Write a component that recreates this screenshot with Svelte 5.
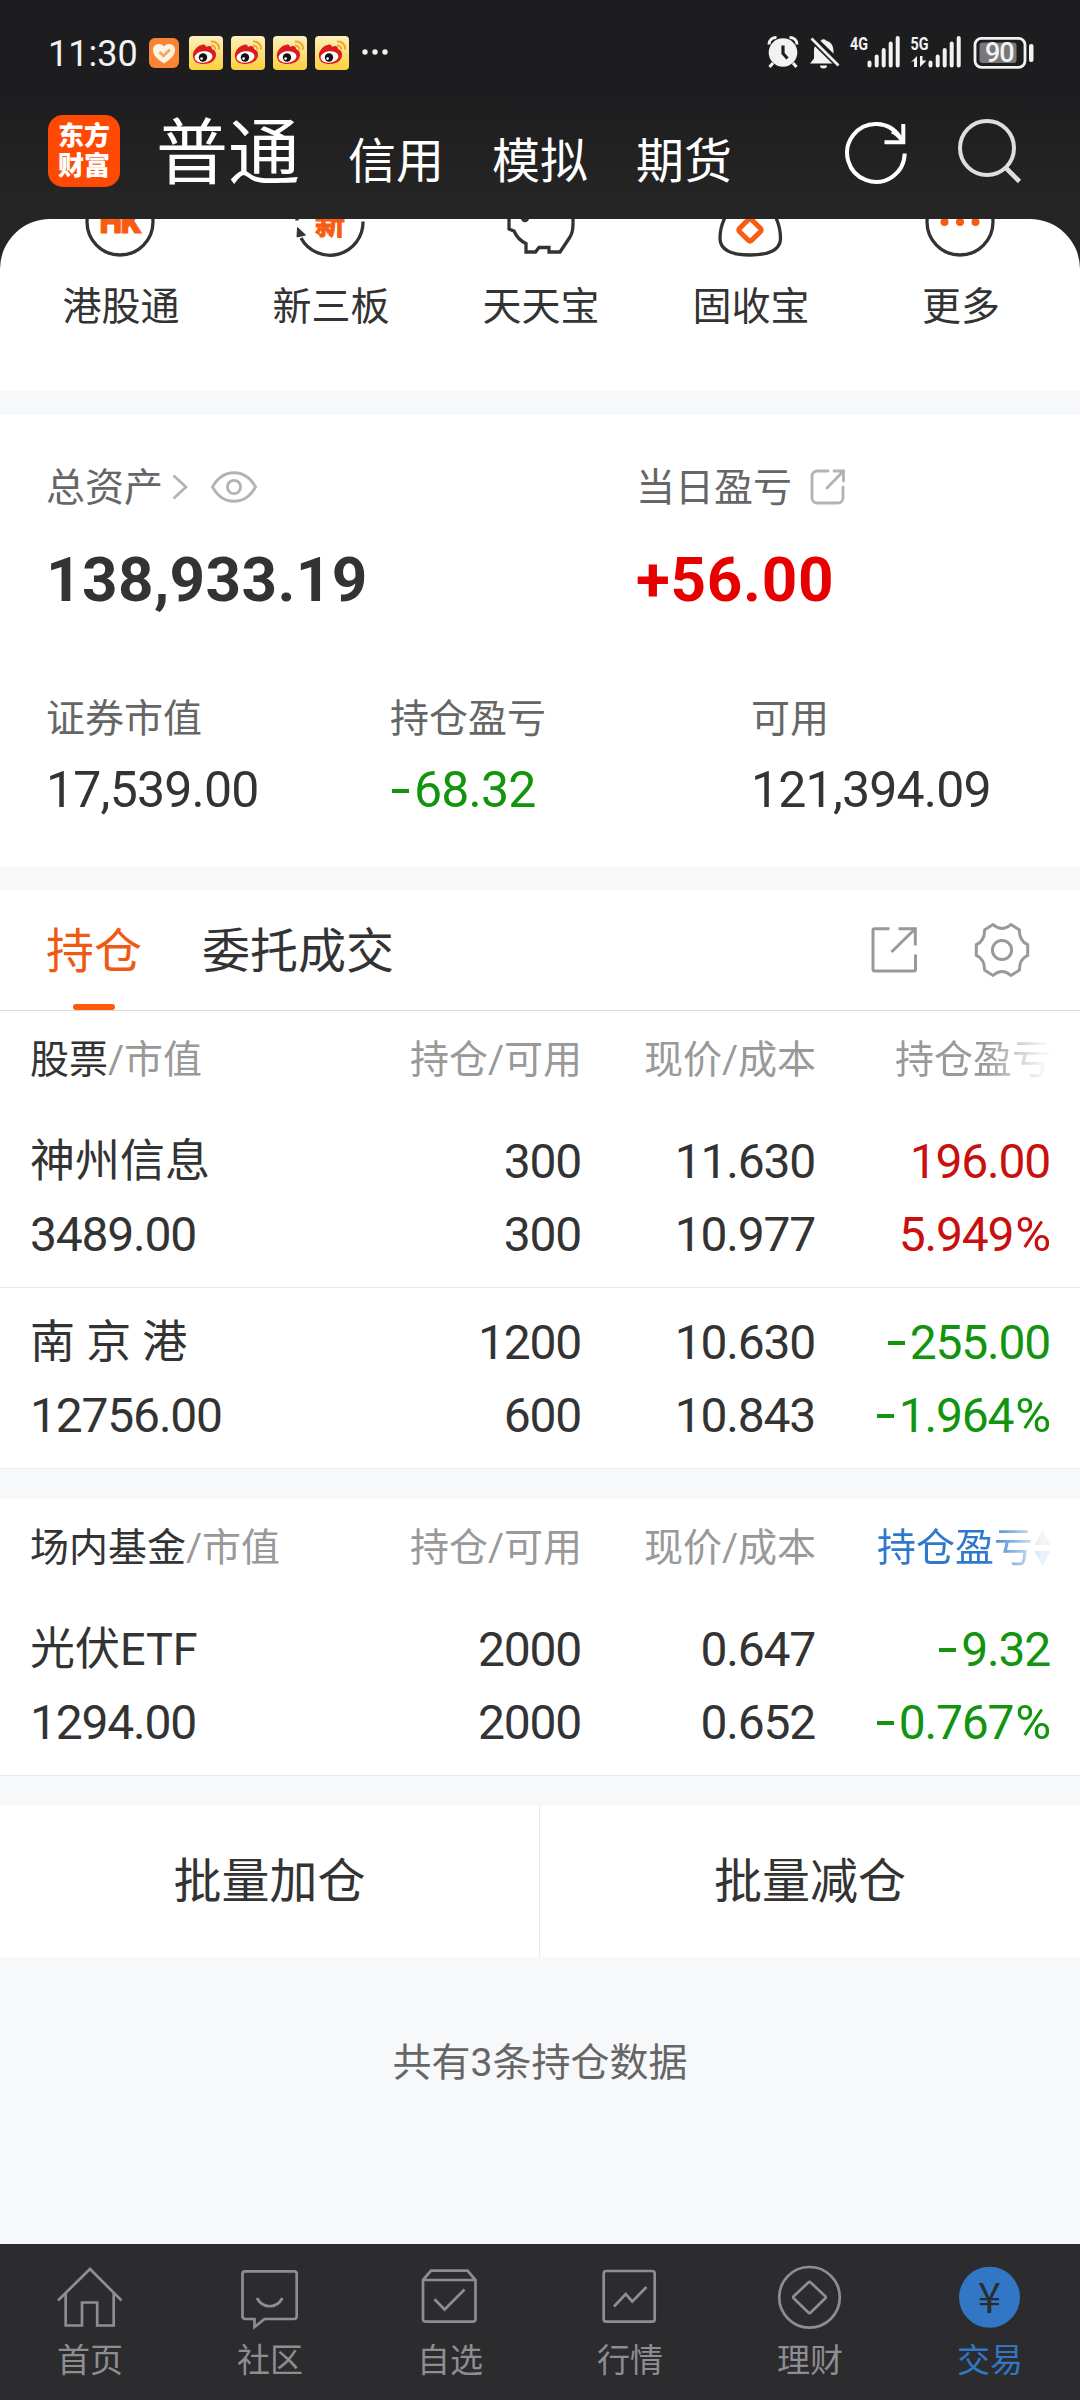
<script lang="ts">
	interface Holding {
		name: string;
		value: string;
		amount: string;
		available: string;
		price: string;
		cost: string;
		profit: string;
		rate: string;
	}

	interface Group {
		title: string;
		sorted: boolean;
		rows: Holding[];
	}

	const accounts = ['信用', '模拟', '期货'];

	const shortcuts = [
		{ id: 'hk', label: '港股通' },
		{ id: 'neeq', label: '新三板' },
		{ id: 'piggy', label: '天天宝' },
		{ id: 'bag', label: '固收宝' },
		{ id: 'more', label: '更多' }
	];

	const groups: Group[] = [
		{
			title: '股票',
			sorted: false,
			rows: [
				{
					name: '神州信息',
					value: '3489.00',
					amount: '300',
					available: '300',
					price: '11.630',
					cost: '10.977',
					profit: '196.00',
					rate: '5.949%'
				},
				{
					name: '南 京 港',
					value: '12756.00',
					amount: '1200',
					available: '600',
					price: '10.630',
					cost: '10.843',
					profit: '-255.00',
					rate: '-1.964%'
				}
			]
		},
		{
			title: '场内基金',
			sorted: true,
			rows: [
				{
					name: '光伏ETF',
					value: '1294.00',
					amount: '2000',
					available: '2000',
					price: '0.647',
					cost: '0.652',
					profit: '-9.32',
					rate: '-0.767%'
				}
			]
		}
	];

	const navItems = [
		{ id: 'home', label: '首页' },
		{ id: 'community', label: '社区' },
		{ id: 'watchlist', label: '自选' },
		{ id: 'market', label: '行情' },
		{ id: 'wealth', label: '理财' },
		{ id: 'trade', label: '交易' }
	];

	let activeTab = $state('holdings');
	let activeNav = $state('trade');
</script>

{#snippet weibo()}
	<svg class="weibo" viewBox="0 0 34 34">
		<defs>
			<linearGradient id="weibo-bg" x1="0" y1="0" x2="0" y2="1">
				<stop offset="0" stop-color="#fdf0c0" />
				<stop offset="1" stop-color="#fdd03a" />
			</linearGradient>
		</defs>
		<rect width="34" height="34" rx="4" fill="url(#weibo-bg)" />
		<path
			d="M4 21C3 15 9 9 13 9c2-1 4 0 4 2 3-2 6-1 6 2 3 1 4 3 4 6 0 5-5 9-12 9S5 26 4 21Z"
			fill="#dc1c1c"
		/>
		<ellipse cx="14.5" cy="21" rx="9" ry="5.8" fill="#fff" transform="rotate(-7 14.5 21)" />
		<circle cx="14" cy="21.5" r="4.2" fill="#111" />
		<circle cx="12.6" cy="22.6" r="1.3" fill="#fff" />
		<path
			d="M22 5.500c5-.5 8.500 3 8 8M22 9.500c3 0 4.500 1.500 4.200 4.200"
			fill="none"
			stroke="#f2a52c"
			stroke-width="2"
		/>
	</svg>
{/snippet}

{#snippet bars()}
	<path d="M2 26.500v3M9.200 20.500v9M16.200 14v15.500M23.200 7.500v22M30.200 2v27.500" />
{/snippet}

<div class="screen">
	<header class="top">
		<div class="status">
			<div class="status-left">
				<span class="time">11:30</span>
				<svg class="heart" viewBox="0 0 30 30">
					<rect width="30" height="30" rx="6" fill="#fb8434" />
					<path
						d="M15 25.500C8 21 4 17 4 12c0-6 7-8 11-3.500C19 4 26 6 26 12c0 5-4 9-11 13.500Z"
						fill="#fff3e4"
					/>
					<path d="M10.500 14l4 4 6.500-6.500" fill="none" stroke="#f6a55c" stroke-width="2.600" />
				</svg>
				<div class="weibos">
					{#each [1, 2, 3, 4] as n (n)}
						{@render weibo()}
					{/each}
				</div>
				<svg class="dots" viewBox="0 0 26 8" fill="#f2f2f2">
					<circle cx="3" cy="4" r="2.700" />
					<circle cx="13" cy="4" r="2.700" />
					<circle cx="23" cy="4" r="2.700" />
				</svg>
			</div>
			<svg class="status-right" viewBox="0 -6 268 46" fill="#f2f2f2">
				<!-- alarm -->
				<circle cx="16" cy="17.500" r="14.300" />
				<path
					d="M2 9.500C2 5 5 2.500 9.500 2.500M22.500 2.500C27 2.500 30 5 30 9.500M6 28l-3.500 4M26 28l3.500 4"
					fill="none"
					stroke="#f2f2f2"
					stroke-width="3"
				/>
				<path d="M16 10.500v8l4.500 5" fill="none" stroke="#1d1d1f" stroke-width="3.200" />
				<!-- muted bell -->
				<path
					d="M43 28.500l4-5v-7c0-6 2.500-9.500 7-11a3 3 0 0 1 5 0c5 1.500 7.500 5 7.500 11v7l2 5ZM53 30.500h7a3.500 3 0 0 1-7 0Z"
				/>
				<path d="M45 3l28 27.500" stroke="#1d1d1f" stroke-width="8" />
				<path d="M44.500 3.500L71.500 30.500" stroke="#f2f2f2" stroke-width="2.600" />
				<text x="83" y="15" class="net" textLength="18" lengthAdjust="spacingAndGlyphs">4G</text>
				<g transform="translate(100.500 1)" stroke="#f2f2f2" stroke-width="4" stroke-linecap="round">
					{@render bars()}
				</g>
				<text x="143.500" y="15" class="net" textLength="18" lengthAdjust="spacingAndGlyphs">5G</text>
				<path d="M144 27l6-6v11h-3v-6ZM153 21h2.500v4.500h4l-6.500 6.500Z" />
				<g transform="translate(161.500 1)" stroke="#f2f2f2" stroke-width="4" stroke-linecap="round">
					{@render bars()}
				</g>
				<rect
					x="208"
					y="3.300"
					width="50"
					height="29"
					rx="6.500"
					fill="none"
					stroke="#f2f2f2"
					stroke-width="2.800"
				/>
				<rect x="212.500" y="7.500" width="37" height="20.500" rx="3" fill="#78787a" />
				<rect x="262" y="9" width="4.500" height="18" rx="2" />
				<text x="218" y="27" class="level" textLength="29.500">90</text>
			</svg>
		</div>
		<div class="titlebar">
			<div class="logo">
				<span>东方</span>
				<span>财富</span>
			</div>
			<nav class="accounts">
				<span class="current">普通</span>
				{#each accounts as account (account)}
					<span>{account}</span>
				{/each}
			</nav>
			<svg class="refresh" viewBox="0 0 66 66" fill="none" stroke="#fff" stroke-width="4">
				<path d="M60.700 33.500A28.800 29 0 1 1 56 17" />
				<path d="M59.300 4v18.300H40.500" />
				<path d="M48 11.500Q55 15 59.300 22.300" />
			</svg>
			<svg class="search" viewBox="0 0 66 66" fill="none" stroke="#dedede" stroke-width="4">
				<circle cx="30" cy="29" r="27" />
				<path d="M48.500 48.500L62.500 62.500" stroke-width="4.600" />
			</svg>
		</div>
	</header>

	<div class="sheet-wrap">
		<section class="shortcuts">
			{#each shortcuts as item (item.id)}
				<div class="shortcut">
					<svg viewBox="0 0 72 72" fill="none" stroke="#333" stroke-width="3.300">
						{#if item.id === 'hk'}
							<circle cx="36" cy="36" r="33" />
							<text x="15.500" y="47" class="badge" textLength="41.500">HK</text>
						{:else if item.id === 'neeq'}
							<path d="M69 35.500A33 33 0 0 1 7 52" />
							<path d="M3.500 41.500l8 7.500-8.500 2Z" fill="#333" stroke-width="1" />
							<path d="M3 31.500v3" />
							<text x="21" y="47.500" class="badge cjk">新</text>
						{:else if item.id === 'piggy'}
							<path
								d="M5 20V43l5 2Q14 54 22 57.500V66H31.500L35 61.500H45V66H56L66 51Q69 46 69 38V20"
							/>
							<circle cx="21" cy="32" r="2.500" fill="#333" />
						{:else if item.id === 'bag'}
							<path d="M14 26Q6 39 6 52Q6 69 36 69Q66.500 69 66.500 52Q66.500 39 59 26" />
							<rect
								x="27.500"
								y="35.500"
								width="17"
								height="17"
								rx="2"
								transform="rotate(45 36 44)"
								stroke="#f85c12"
								stroke-width="5"
							/>
						{:else}
							<circle cx="36" cy="36" r="33" />
							<g fill="#f85c12" stroke="none">
								<circle cx="20.500" cy="36" r="4" />
								<circle cx="36" cy="36" r="4" />
								<circle cx="51.500" cy="36" r="4" />
							</g>
						{/if}
					</svg>
					<span>{item.label}</span>
				</div>
			{/each}
		</section>
	</div>

	<section class="assets">
		<div class="totals">
			<div class="total">
				<div class="label">
					总资产
					<svg class="chevron" viewBox="0 0 16 26">
						<path d="M1.500 1.500L14 13L1.500 24.500" />
					</svg>
					<svg class="eye" viewBox="0 0 46 32">
						<path d="M1.500 16C12-3 34-3 44.500 16C34 35 12 35 1.500 16Z" />
						<circle cx="23" cy="16" r="6.600" />
					</svg>
				</div>
				<div class="figure">138,933.19</div>
			</div>
			<div class="total">
				<div class="label">
					当日盈亏
					<svg class="share" viewBox="0 0 36 36">
						<path d="M18 2H7a5 5 0 0 0-5 5V29a5 5 0 0 0 5 5H28a5 5 0 0 0 5-5V18" />
						<path d="M17 19L33 2.500M24 2H33.500V12" />
					</svg>
				</div>
				<div class="figure gain">+56.00</div>
			</div>
		</div>
		<div class="breakdown">
			<div>
				<div class="label">证券市值</div>
				<div class="amount">17,539.00</div>
			</div>
			<div>
				<div class="label">持仓盈亏</div>
				<div class="amount down"><i class="minus"></i>68.32</div>
			</div>
			<div>
				<div class="label">可用</div>
				<div class="amount">121,394.09</div>
			</div>
		</div>
	</section>

	<div class="tabs">
		<button
			type="button"
			class:active={activeTab === 'holdings'}
			onclick={() => (activeTab = 'holdings')}>持仓</button
		>
		<button type="button" class:active={activeTab === 'orders'} onclick={() => (activeTab = 'orders')}
			>委托成交</button
		>
		<svg class="tool export" viewBox="0 0 48 48">
			<path
				d="M19.500 2.800H4.500a1.500 1.500 0 0 0-1.500 1.500V43.500a1.500 1.500 0 0 0 1.500 1.500H44a1.500 1.500 0 0 0 1.500-1.500V28.500"
			/>
			<path d="M21.500 26L45 3M28.500 2.800H45.300V19.500" />
		</svg>
		<svg class="tool gear" viewBox="-28 -28 56 56">
			<path
				d="M-9-25.500Q0-17.500 9-25.500L17.300-20.200Q17.500-8.500 25.700-5.300V5.300Q17.500 8.500 17.300 20.200L9 25.500Q0 17.500-9 25.500L-17.300 20.200Q-17.500 8.500-25.700 5.300V-5.300Q-17.500-8.500-17.300-20.200Z"
			/>
			<circle r="9.600" />
		</svg>
	</div>

	{#each groups as group (group.title)}
		<section class="group">
			<div class="grid head">
				<div class="first"><b>{group.title}</b>/市值</div>
				<div>持仓/可用</div>
				<div>现价/成本</div>
				<div class="fade" class:sorted={group.sorted}>
					持仓盈亏
					{#if group.sorted}
						<svg viewBox="0 0 17 36">
							<path d="M8.500 0l8 15H.5Z" fill="#999" />
							<path d="M8.500 36l8-15H.5Z" fill="#2f78cc" />
						</svg>
					{/if}
				</div>
			</div>
			{#each group.rows as row (row.name)}
				<div class="grid row">
					<div class="first">
						<div class="name">{row.name}</div>
						<div>{row.value}</div>
					</div>
					<div>
						<div>{row.amount}</div>
						<div>{row.available}</div>
					</div>
					<div>
						<div>{row.price}</div>
						<div>{row.cost}</div>
					</div>
					<div class={row.profit.startsWith('-') ? 'down' : 'up'}>
						{#each [row.profit, row.rate] as figure (figure)}
							<div>
								{#if figure.startsWith('-')}<i class="minus"></i>{/if}{figure.replace(
									/[-%]/g,
									''
								)}{#if figure.endsWith('%')}<span class="percent">%</span>{/if}
							</div>
						{/each}
					</div>
				</div>
			{/each}
		</section>
	{/each}

	<div class="batch">
		<button type="button">批量加仓</button>
		<button type="button">批量减仓</button>
	</div>

	<p class="summary">共有3条持仓数据</p>

	<nav class="bottom-nav">
		{#each navItems as item (item.id)}
			<button
				type="button"
				class:active={activeNav === item.id}
				onclick={() => (activeNav = item.id)}
			>
				<svg viewBox="0 0 72 72">
					{#if item.id === 'home'}
						<path d="M4 38.500L36 7L67.500 38.500M11.700 31.500V63.500H28V40.500H43.200V63.500H59.700V31.500" />
					{:else if item.id === 'community'}
						<path
							d="M11 9.300H60.200a2.500 2.500 0 0 1 2.500 2.500V54.500a2.500 2.500 0 0 1-2.500 2.500H30.500L20.500 65V57H11a2.500 2.500 0 0 1-2.500-2.500V11.800A2.500 2.500 0 0 1 11 9.300Z"
						/>
						<path d="M22.900 36C29 47 42.500 47 48.400 36" />
					{:else if item.id === 'watchlist'}
						<path
							d="M9 18L17 8.700H53.500L61.500 18V57.200a2.500 2.500 0 0 1-2.500 2.500H11.500a2.500 2.500 0 0 1-2.500-2.500ZM9 18H61.500M20.500 37.300L30.600 47.500L50.500 27.500"
						/>
					{:else if item.id === 'market'}
						<rect x="9.700" y="9" width="51" height="50.700" rx="2.500" />
						<path d="M20 44.500L31.700 32L38.300 39.500L52.500 25" />
					{:else if item.id === 'wealth'}
						<circle cx="35.500" cy="35.300" r="30.300" />
						<path
							d="M34.300 20.500Q35.500 19 36.700 20.500L51.300 34.300Q52.300 35.300 51.300 36.300L36.700 50.500Q35.500 51.500 34.300 50.500L19.700 36.300Q18.700 35.300 19.700 34.300Z"
						/>
					{:else}
						<circle class="coin" cx="35.500" cy="35.300" r="30.500" />
						<text class="yen" x="35.500" y="51">¥</text>
					{/if}
				</svg>
				<span>{item.label}</span>
			</button>
		{/each}
	</nav>
</div>

<style>
	:global(body) {
		margin: 0;
	}

	.screen {
		display: flex;
		flex-direction: column;
		width: 1080px;
		height: 2400px;
		overflow: hidden;
		background: #f7f8fa;
		color: #333;
		font-family: Roboto, 'Noto Sans CJK SC', sans-serif;
		font-size: 39px;
		line-height: 48px;
	}

	button {
		margin: 0;
		padding: 0;
		border: none;
		background: none;
		color: inherit;
		font: inherit;
		cursor: pointer;
	}

	svg {
		display: block;
		flex-shrink: 0;
	}

	.top {
		height: 219px;
		background: linear-gradient(#1d1d1f 90px, #252525 200px);
		color: #fff;
	}

	.status {
		display: flex;
		justify-content: space-between;
		align-items: center;
		height: 104px;
		padding: 0 45px 0 48px;
	}

	.status-left {
		display: flex;
		align-items: center;
	}

	.time {
		width: 101px;
		padding-top: 3px;
		font-size: 36px;
		line-height: 40px;
		color: #f2f2f2;
	}

	.heart {
		width: 30px;
		height: 30px;
		margin: 2px 10px 0 0;
	}

	.weibos {
		display: flex;
		gap: 8px;
		margin-top: 2px;
	}

	.weibo {
		width: 34px;
		height: 34px;
	}

	.dots {
		width: 26px;
		height: 8px;
		margin-left: 13px;
	}

	.status-right {
		width: 268px;
		height: 46px;
	}

	.net {
		font-size: 18px;
		font-weight: 700;
	}

	.level {
		font-size: 27px;
		font-weight: 500;
	}

	.titlebar {
		display: flex;
		align-items: center;
		height: 96px;
		padding: 0 57px 0 48px;
	}

	.logo {
		display: flex;
		flex-direction: column;
		justify-content: center;
		width: 72px;
		height: 72px;
		margin-top: -2px;
		margin-right: 36px;
		border-radius: 15px;
		background: #ff4a05;
		font-size: 26px;
		font-weight: 900;
		line-height: 30px;
		text-align: center;
	}

	.accounts {
		display: flex;
		flex: 1;
		align-items: baseline;
		gap: 48px;
		margin-top: 11px;
		font-size: 48px;
		line-height: 80px;
	}

	.accounts .current {
		font-size: 72px;
	}

	.refresh {
		width: 66px;
		height: 66px;
		margin-top: 2px;
		margin-right: 47px;
	}

	.search {
		width: 66px;
		height: 66px;
	}

	.sheet-wrap {
		background: #252525;
	}

	.shortcuts {
		display: flex;
		height: 172px;
		padding: 0 14px 0 16px;
		box-sizing: border-box;
		overflow: hidden;
		border-radius: 50px 50px 0 0;
		background: #fff;
	}

	.shortcut {
		display: flex;
		flex: 1;
		flex-direction: column;
		align-items: center;
		gap: 25px;
		margin-top: -33px;
	}

	.shortcut svg {
		width: 72px;
		height: 72px;
		margin-left: -2px;
	}

	.badge {
		fill: #f85c12;
		stroke: #f85c12;
		stroke-width: 1;
		font-size: 32px;
		font-weight: 900;
	}

	.badge.cjk {
		font-size: 30px;
		font-weight: 700;
	}

	.assets {
		box-sizing: border-box;
		height: 451px;
		margin: 24px 0;
		padding-top: 49px;
		background: #fff;
	}

	.totals {
		display: grid;
		grid-template-columns: 590px 1fr;
		padding-left: 46px;
	}

	.label {
		display: flex;
		align-items: center;
		color: #666;
	}

	.label svg {
		margin-top: -2px;
		fill: none;
		stroke: #b3b3b3;
		stroke-width: 2.8;
	}

	.chevron {
		width: 16px;
		height: 26px;
		margin-left: 9px;
	}

	.eye {
		width: 46px;
		height: 32px;
		margin-left: 23px;
	}

	.share {
		width: 36px;
		height: 36px;
		margin-left: 18px;
		stroke-linecap: round;
	}

	.figure {
		margin-top: 32px;
		font-size: 62px;
		font-weight: 700;
		line-height: 72px;
		letter-spacing: 0.4px;
	}

	.gain {
		letter-spacing: 0.7px;
		color: #e60000;
	}

	.breakdown {
		display: grid;
		grid-template-columns: 344px 361px 1fr;
		margin-top: 79px;
		padding-left: 46px;
	}

	.amount {
		margin-top: 17px;
		font-size: 50px;
		line-height: 60px;
		letter-spacing: -0.8px;
	}

	.up {
		color: #c8100f;
	}

	.down {
		color: #12940f;
	}

	.minus {
		display: inline-block;
		width: 17px;
		height: 4px;
		margin: 0 5px 0 2px;
		background: currentColor;
		vertical-align: 14px;
	}

	.tabs {
		display: flex;
		align-items: center;
		gap: 60px;
		box-sizing: border-box;
		height: 121px;
		padding: 0 50px 0 46px;
		border-bottom: 1px solid #d9d9d9;
		background: #fff;
		font-size: 48px;
	}

	.tabs button {
		position: relative;
		height: 120px;
		padding-top: 3px;
		box-sizing: border-box;
	}

	.tabs .active {
		color: #ee5a12;
	}

	.tabs .active::after {
		content: '';
		position: absolute;
		bottom: 0;
		left: 50%;
		width: 42px;
		height: 6px;
		border-radius: 3px;
		background: #ff5a0c;
		transform: translateX(-50%);
	}

	.tool {
		fill: none;
		stroke: #999;
		stroke-width: 3;
	}

	.export {
		width: 48px;
		height: 48px;
		margin-left: auto;
	}

	.gear {
		width: 56px;
		height: 56px;
		margin-left: -4px;
	}

	.group {
		background: #fff;
	}

	.group + .group {
		margin-top: 30px;
	}

	.grid {
		display: grid;
		grid-template-columns: 1fr 250px 234px 235px;
		padding: 0 29px 0 30px;
		text-align: right;
	}

	.first {
		text-align: left;
	}

	.head {
		height: 96px;
		line-height: 98px;
		color: #999;
	}

	.head b {
		color: #333;
		font-weight: 400;
	}

	.fade {
		display: flex;
		justify-content: flex-end;
		align-items: center;
		mask-image: linear-gradient(to right, #000 72%, rgba(0, 0, 0, 0.1) 96%);
	}

	.sorted {
		color: #2f78cc;
	}

	.fade svg {
		width: 17px;
		height: 36px;
		margin-left: 1px;
	}

	.row {
		padding: 18px 30px 16px 30px;
		border-bottom: 1px solid #ebebeb;
		font-size: 48px;
		line-height: 73px;
		letter-spacing: -1.2px;
	}

	.name {
		font-size: 45px;
		letter-spacing: 0;
	}

	.percent {
		margin-left: 2px;
		font-size: 49px;
	}

	.batch {
		display: grid;
		grid-template-columns: 1fr 1fr;
		height: 151px;
		margin-top: 30px;
		background: #fff;
		font-size: 48px;
	}

	.batch button:first-child {
		border-right: 1px solid #ebebeb;
	}

	.summary {
		margin: 82px 0 0;
		color: #666;
		text-align: center;
	}

	.bottom-nav {
		display: grid;
		grid-template-columns: repeat(6, 1fr);
		height: 156px;
		margin-top: auto;
		background: #2c2c2e;
		color: #8e8e92;
		font-size: 33px;
	}

	.bottom-nav button {
		display: flex;
		flex-direction: column;
		align-items: center;
		gap: 3px;
		padding-top: 18px;
	}

	.bottom-nav svg {
		width: 72px;
		height: 72px;
		fill: none;
		stroke: currentColor;
		stroke-width: 2.7;
	}

	.bottom-nav .active {
		color: #3277c5;
	}

	.bottom-nav .coin {
		fill: currentColor;
		stroke: none;
	}

	.bottom-nav .yen {
		fill: #2c2c2e;
		stroke: none;
		font-family: 'Noto Sans CJK SC', sans-serif;
		font-size: 42px;
		font-weight: 400;
		text-anchor: middle;
	}
</style>
